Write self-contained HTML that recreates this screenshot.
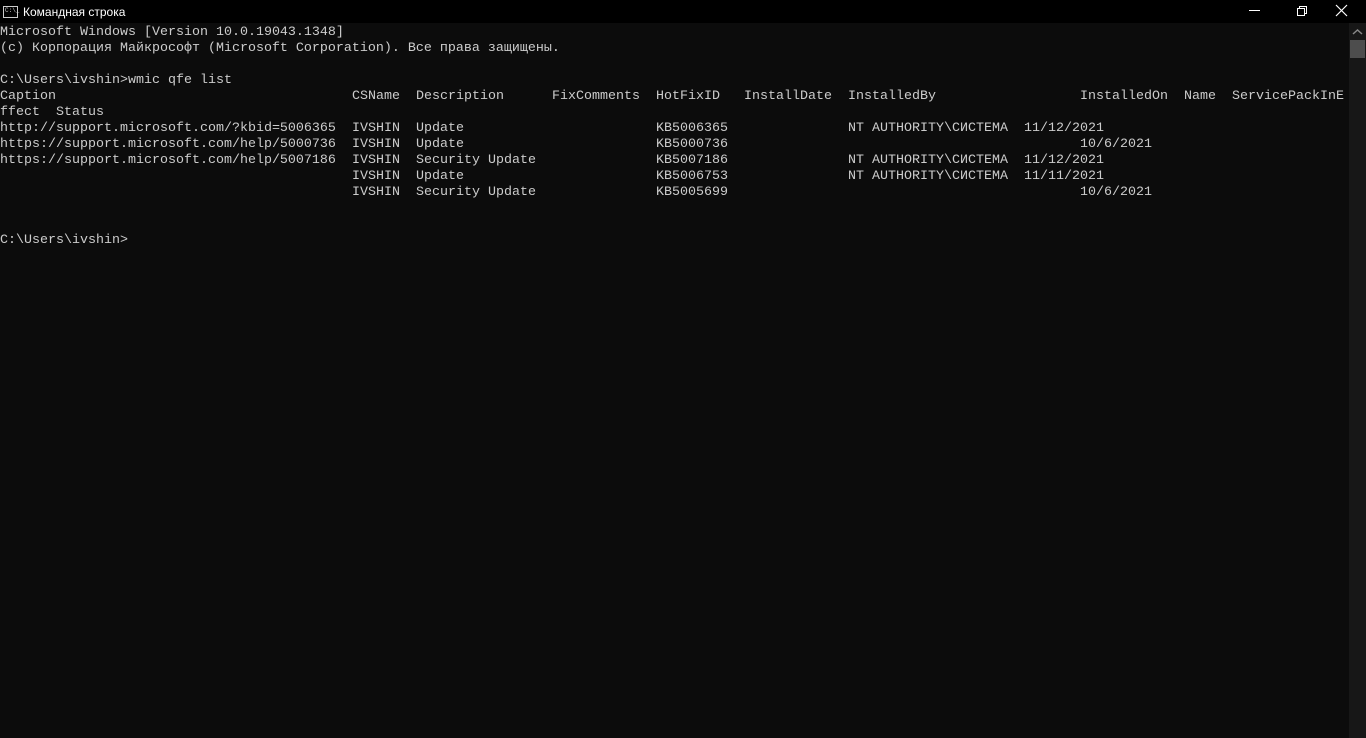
<!DOCTYPE html>
<html><head><meta charset="utf-8"><style>
html,body{margin:0;padding:0;width:1366px;height:738px;overflow:hidden;background:#0c0c0c;}
#tb{position:absolute;left:0;top:0;width:1366px;height:23px;background:#000;}
#tb .t{position:absolute;left:23px;top:5px;font:12px "Liberation Sans",sans-serif;color:#fff;}
#ic{position:absolute;left:3px;top:6px;width:13px;height:10px;border:1px solid #ccc;background:#000;}
#ic span{position:absolute;left:1px;top:0;font:6px "Liberation Mono",monospace;color:#ccc;line-height:8px}
#sb{position:absolute;left:1349px;top:23px;width:17px;height:715px;background:#171717;}
#th{position:absolute;left:1350px;top:40px;width:15px;height:18px;background:#4d4d4d;}
.r{position:absolute;left:0;height:16px;font:13.333px/16px "Liberation Mono",monospace;color:#cccccc;white-space:pre;}
.r span{position:absolute;top:0;}
#c{position:absolute;left:0;top:1px;width:1349px;height:737px;}
</style></head><body>
<div id="tb"><div id="ic"><span>C:\_</span></div><div class="t">Командная строка</div>
<svg style="position:absolute;left:1240px;top:0" width="126" height="23">
<line x1="9" y1="10.5" x2="20" y2="10.5" stroke="#fff" stroke-width="1"/>
<rect x="57.5" y="8.5" width="7" height="7" fill="none" stroke="#fff"/>
<path d="M59.5 8.5V6.5H66.5V13.5H64.5" fill="none" stroke="#fff"/>
<path d="M96 5L107 16M107 5L96 16" stroke="#fff" stroke-width="1.2"/>
</svg></div>
<div id="sb"></div>
<svg style="position:absolute;left:1350px;top:27px" width="15" height="10"><path d="M3 7L7.5 3L12 7" stroke="#888" stroke-width="1.5" fill="none"/></svg>
<div id="th"></div>
<div id="c">
<div class="r" style="top:24px">Microsoft Windows [Version 10.0.19043.1348]</div>
<div class="r" style="top:40px">(c) Корпорация Майкрософт (Microsoft Corporation). Все права защищены.</div>
<div class="r" style="top:72px">C:\Users\ivshin&gt;wmic qfe list</div>
<div class="r" style="top:88px"><span style="left:0">Caption</span><span style="left:352px">CSName</span><span style="left:416px">Description</span><span style="left:552px">FixComments</span><span style="left:656px">HotFixID</span><span style="left:744px">InstallDate</span><span style="left:848px">InstalledBy</span><span style="left:1080px">InstalledOn</span><span style="left:1184px">Name</span><span style="left:1232px">ServicePackInE</span></div>
<div class="r" style="top:104px">ffect  Status</div>
<div class="r" style="top:120px"><span style="left:0">http://support.microsoft.com/?kbid=5006365</span><span style="left:352px">IVSHIN</span><span style="left:416px">Update</span><span style="left:656px">KB5006365</span><span style="left:848px">NT AUTHORITY\СИСТЕМА</span><span style="left:1024px">11/12/2021</span></div>
<div class="r" style="top:136px"><span style="left:0">https://support.microsoft.com/help/5000736</span><span style="left:352px">IVSHIN</span><span style="left:416px">Update</span><span style="left:656px">KB5000736</span><span style="left:1080px">10/6/2021</span></div>
<div class="r" style="top:152px"><span style="left:0">https://support.microsoft.com/help/5007186</span><span style="left:352px">IVSHIN</span><span style="left:416px">Security Update</span><span style="left:656px">KB5007186</span><span style="left:848px">NT AUTHORITY\СИСТЕМА</span><span style="left:1024px">11/12/2021</span></div>
<div class="r" style="top:168px"><span style="left:352px">IVSHIN</span><span style="left:416px">Update</span><span style="left:656px">KB5006753</span><span style="left:848px">NT AUTHORITY\СИСТЕМА</span><span style="left:1024px">11/11/2021</span></div>
<div class="r" style="top:184px"><span style="left:352px">IVSHIN</span><span style="left:416px">Security Update</span><span style="left:656px">KB5005699</span><span style="left:1080px">10/6/2021</span></div>
<div class="r" style="top:232px">C:\Users\ivshin&gt;</div>
</div>
</body></html>
